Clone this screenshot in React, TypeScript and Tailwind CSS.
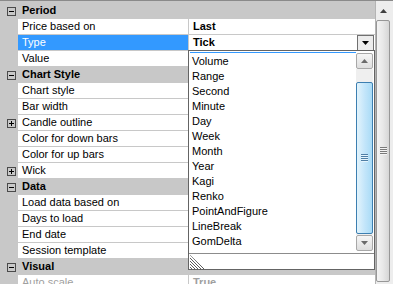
import React from 'react';

type Row =
  | { kind: 'cat'; label: string }
  | { kind: 'prop'; name: string; value?: string; plus?: boolean; selected?: boolean; dropdown?: boolean; disabled?: boolean };

const rows: Row[] = [
  { kind: 'cat', label: 'Period' },
  { kind: 'prop', name: 'Price based on', value: 'Last' },
  { kind: 'prop', name: 'Type', value: 'Tick', selected: true, dropdown: true },
  { kind: 'prop', name: 'Value' },
  { kind: 'cat', label: 'Chart Style' },
  { kind: 'prop', name: 'Chart style' },
  { kind: 'prop', name: 'Bar width' },
  { kind: 'prop', name: 'Candle outline', plus: true },
  { kind: 'prop', name: 'Color for down bars' },
  { kind: 'prop', name: 'Color for up bars' },
  { kind: 'prop', name: 'Wick', plus: true },
  { kind: 'cat', label: 'Data' },
  { kind: 'prop', name: 'Load data based on' },
  { kind: 'prop', name: 'Days to load' },
  { kind: 'prop', name: 'End date' },
  { kind: 'prop', name: 'Session template' },
  { kind: 'cat', label: 'Visual' },
  { kind: 'prop', name: 'Auto scale', value: 'True', disabled: true },
];

const items = [
  'Volume', 'Range', 'Second', 'Minute', 'Day', 'Week', 'Month', 'Year', 'Kagi', 'Renko',
  'PointAndFigure', 'LineBreak', 'GomDelta',
];

function Glyph({ plus }: { plus?: boolean }) {
  return (
    <svg width="9" height="9" viewBox="0 0 9 9" className="block">
      <rect x="0.5" y="0.5" width="8" height="8" fill="none" stroke="#4a4a4a" />
      <line x1="2" y1="4.5" x2="7" y2="4.5" stroke="#000" />
      {plus && <line x1="4.5" y1="2" x2="4.5" y2="7" stroke="#000" />}
    </svg>
  );
}

function Arrow({ up, color, w = 7, h = 4 }: { up?: boolean; color: string; w?: number; h?: number }) {
  return (
    <svg width={w} height={h} viewBox={`0 0 ${w} ${h}`} className="block">
      {up ? (
        <polygon points={`0,${h} ${w},${h} ${w / 2},0`} fill={color} />
      ) : (
        <polygon points={`0,0 ${w},0 ${w / 2},${h}`} fill={color} />
      )}
    </svg>
  );
}

function Grip({ color, light }: { color: string; light: string }) {
  return (
    <svg width="7" height="8" viewBox="0 0 7 8" className="block">
      {[0, 2, 4, 6].map((y) => (
        <g key={y}>
          <rect x="0" y={y} width="7" height="1" fill={color} />
          <rect x="0" y={y + 1} width="7" height="1" fill={light} />
        </g>
      ))}
    </svg>
  );
}

function ResizeGrip() {
  return (
    <svg width="15" height="14" viewBox="0 0 15 14" className="block">
      <defs>
        <clipPath id="tri">
          <polygon points="0,0 0,14 15,14" />
        </clipPath>
      </defs>
      <g clipPath="url(#tri)" stroke="#5a5a5a" strokeWidth="1">
        {[0, 3, 6, 9, 12].map((o) => (
          <line key={o} x1={-2} y1={o - 2} x2={16} y2={o + 16} />
        ))}
      </g>
    </svg>
  );
}

export default function App() {
  return (
    <div className="relative w-[393px] h-[284px] overflow-hidden bg-[#c8c8c8] font-['Liberation_Sans',Arial,sans-serif] text-[11px] text-black">
      <div className="h-px bg-[#8a8a8a]" />
      <div className="flex h-[283px]">
        <div className="w-[375px] shrink-0">
          <div className="h-[2px]" />
          {rows.map((r, i) =>
            r.kind === 'cat' ? (
              <div key={i} className="flex h-[16px] border-b border-[#c8c8c8]">
                <div className="w-[18px] shrink-0 pl-[7px] pt-[4px]">
                  <Glyph />
                </div>
                <div className="pl-[4px] font-bold leading-[15px]">{r.label}</div>
              </div>
            ) : (
              <div key={i} className="flex h-[16px] border-b border-[#c8c8c8]">
                <div className="w-[18px] shrink-0 pl-[7px] pt-[4px]">{r.plus && <Glyph plus />}</div>
                <div
                  className={
                    'w-[171px] shrink-0 border-r border-[#c8c8c8] pl-[4px] leading-[15px] whitespace-nowrap ' +
                    (r.selected ? 'bg-[#3399ff] text-white' : 'bg-white') +
                    (r.disabled ? ' text-[#a0a0a0]' : '')
                  }
                >
                  {r.name}
                </div>
                <div className="flex flex-1 items-start justify-between bg-white">
                  <span className={'pl-[4px] font-bold leading-[15px] ' + (r.disabled ? 'text-[#a0a0a0]' : '')}>
                    {r.value ?? ''}
                  </span>
                  {r.dropdown && (
                    <div className="mr-[1px] flex h-[15px] w-[17px] items-center justify-center border border-b-0 border-[#707070] bg-[#ececec]">
                      <Arrow color="#000" w={7} h={4} />
                    </div>
                  )}
                </div>
              </div>
            ),
          )}
        </div>

        {/* main vertical scrollbar */}
        <div className="flex w-[18px] shrink-0 flex-col border-l border-[#b4b4b4] bg-[#ededed]">
          <div className="flex h-[19px] w-[14px] items-center justify-center">
            <Arrow up color="#404040" w={7} h={4} />
          </div>
          <div className="flex h-[262px] w-[14px] items-center justify-center rounded-[2px] border border-[#979797] bg-gradient-to-r from-[#f4f4f4] via-[#e8e8e8] to-[#d6d6d6]">
            <Grip color="#7a7a7a" light="#f4f4f4" />
          </div>
        </div>
      </div>

      {/* dropdown list */}
      <div className="absolute left-[188px] top-[50px] flex h-[220px] w-[187px] flex-col border border-[#646464] bg-white">
        <div className="flex h-[202px]">
          <div className="flex-1">
            <div className="h-[2px]">
              <div className="ml-[1px] mt-[1px] h-px bg-[#3399ff]" />
            </div>
            {items.map((it) => (
              <div key={it} className="h-[15px] pl-[3px] leading-[15px] whitespace-nowrap">
                {it}
              </div>
            ))}
          </div>
          <div className="mr-[1px] flex w-[17px] flex-col pt-[2px]">
            <div className="flex h-[16px] items-center justify-center rounded-[2px] border border-[#a8a8a8] bg-gradient-to-b from-[#f6f6f6] to-[#dedede]">
              <Arrow up color="#6a6a6a" w={7} h={4} />
            </div>
            <div className="h-[166px] bg-[#efefef] pt-[13px]">
              <div className="flex h-[152px] items-center justify-center rounded-[2px] border border-[#3c7fb1] bg-gradient-to-r from-[#e3f4fc] via-[#c4e6fa] to-[#a9dbf6]">
                <Grip color="#4f7fa6" light="#e6f5fd" />
              </div>
            </div>
            <div className="flex h-[16px] items-center justify-center rounded-[2px] border border-[#a8a8a8] bg-gradient-to-b from-[#f6f6f6] to-[#dedede]">
              <Arrow color="#6a6a6a" w={7} h={4} />
            </div>
          </div>
        </div>
        <div className="h-px bg-[#8c8c8c]" />
        <div className="h-[15px] pl-[1px] pt-[1px]">
          <ResizeGrip />
        </div>
      </div>
    </div>
  );
}
